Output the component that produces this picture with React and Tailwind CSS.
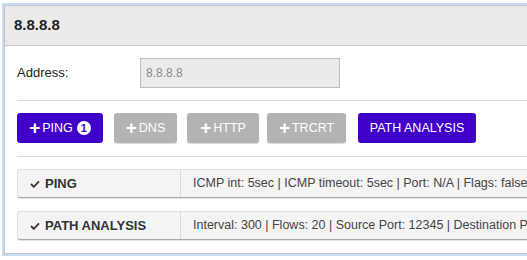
import React from 'react';

const buttons = [
    { label: 'PING', plus: true, active: true, badge: 1, width: 'w-[86px]', ml: '' },
    { label: 'DNS', plus: true, active: false, width: 'w-[63px]', ml: 'ml-[11px]' },
    { label: 'HTTP', plus: true, active: false, width: 'w-[72px]', ml: 'ml-[10px]' },
    { label: 'TRCRT', plus: true, active: false, width: 'w-[79px]', ml: 'ml-[8px]' },
    { label: 'PATH ANALYSIS', plus: false, active: true, width: 'w-[118px]', ml: 'ml-[12px]' },
];

const tests = [
    { name: 'PING', info: 'ICMP int: 5sec | ICMP timeout: 5sec | Port: N/A | Flags: false | Payload size: 64' },
    { name: 'PATH ANALYSIS', info: 'Interval: 300 | Flows: 20 | Source Port: 12345 | Destination Port: 33434' },
];

function Check() {
    return (
        <svg width="10" height="8" viewBox="0 0 10 8" className="mr-[5px]">
            <polyline points="1,4 3.8,6.8 9,1.3" fill="none" stroke="#333" strokeWidth="1.8" />
        </svg>
    );
}

export default function App() {
    return (
        <div className="w-[527px] h-[260px] overflow-hidden bg-white pl-[4px] pt-[5px] font-['Liberation_Sans',Arial,sans-serif]">
            <div className="w-[700px] border border-[#c2c2c2] shadow-[0_0_0_2px_#c9def5] bg-white pb-[13px]">
                <div className="h-[40px] bg-[#ebebeb] border-b border-[#c8c8c8] flex items-center px-[9px]">
                    <span className="text-[15px] font-bold text-[#222]">8.8.8.8</span>
                </div>

                <div className="px-[12px]">
                    <div className="flex items-center mt-[12px] h-[30px]">
                        <label className="w-[123px] text-[13px] text-[#222]">Address:</label>
                        <div className="w-[200px] h-[30px] bg-[#ebebeb] border border-[#bdbdbd] flex items-center px-[5px] text-[12px] text-[#8a8a8a]">
                            8.8.8.8
                        </div>
                    </div>

                    <div className="mt-[12px] border-t border-[#dcdcdc]" />

                    <div className="flex mt-[12px]">
                        {buttons.map((b) => (
                            <button
                                key={b.label}
                                className={`${b.width} ${b.ml} h-[30px] rounded-[3px] flex items-center justify-center text-white text-[12.5px] ${b.active ? 'bg-[#4000c8]' : 'bg-[#b3b3b3] shadow-[0_1px_1px_rgba(0,0,0,0.15)]'}`}
                            >
                                {b.plus && <span className="text-[19px] font-bold leading-none mr-[2px] -mt-[2px]">+</span>}
                                <span>{b.label}</span>
                                {b.badge && (
                                    <span className="ml-[4px] w-[14px] h-[14px] rounded-full bg-white text-[#4000c8] text-[11px] font-bold flex items-center justify-center leading-none">
                                        {b.badge}
                                    </span>
                                )}
                            </button>
                        ))}
                    </div>

                    <div className="mt-[13px] border-t border-[#dcdcdc]" />

                    {tests.map((t, i) => (
                        <div
                            key={t.name}
                            className={`${i === 0 ? 'mt-[12px]' : 'mt-[13px]'} h-[29px] flex bg-[#f4f4f4] border border-[#e0e0e0] border-b-[#a9a9a9] rounded-l-[3px] shadow-[0_1px_1px_rgba(0,0,0,0.12)]`}
                        >
                            <div className="w-[163px] flex items-center pl-[12px] border-r border-[#dadada]">
                                <Check />
                                <span className="text-[13px] font-bold text-[#333]">{t.name}</span>
                            </div>
                            <div className="flex items-center pl-[12px] text-[12.5px] text-[#444] whitespace-nowrap">
                                {t.info}
                            </div>
                        </div>
                    ))}
                </div>
            </div>
        </div>
    );
}
